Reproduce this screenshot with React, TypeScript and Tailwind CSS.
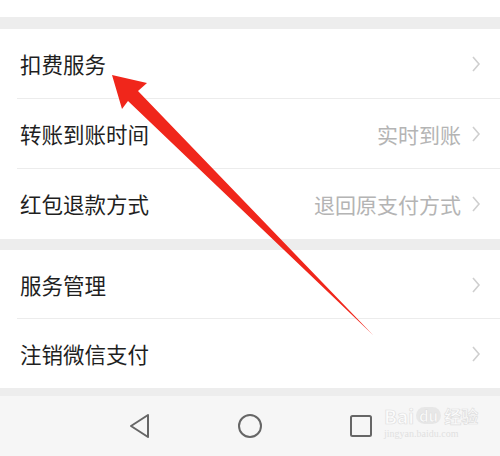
import React from "react";

const font = { fontFamily: '"Noto Sans CJK SC", "Noto Sans", sans-serif' };

function Chevron() {
  return (
    <svg width="10" height="18" viewBox="0 0 10 18" className="ml-[10px]">
      <path d="M2 2 L8 9 L2 16" fill="none" stroke="#cfcfcf" strokeWidth="1.6" />
    </svg>
  );
}

function Row({ label, value, h, divider }: { label: string; value?: string; h: string; divider?: boolean }) {
  return (
    <div className={`relative flex items-center pl-[20px] pr-[19px] bg-white ${h}`}>
      <span className="text-[21.5px] text-[#1f1f1f] flex-1 leading-none">{label}</span>
      {value && <span className="text-[21px] text-[#b4b4b4] leading-none">{value}</span>}
      <Chevron />
      {divider && <div className="absolute left-[17px] right-0 bottom-0 h-px bg-[#ececec]" />}
    </div>
  );
}

export default function App() {
  return (
    <div className="relative w-[500px] h-[456px] overflow-hidden bg-white flex flex-col" style={font}>
      <div className="h-[17px] bg-white" />
      <div className="h-[12px] bg-[#ededed]" />
      <Row label="扣费服务" h="h-[70px]" divider />
      <Row label="转账到账时间" value="实时到账" h="h-[70px]" divider />
      <Row label="红包退款方式" value="退回原支付方式" h="h-[70px]" />
      <div className="h-[11px] bg-[#ededed]" />
      <Row label="服务管理" h="h-[69px]" divider />
      <Row label="注销微信支付" h="h-[69px]" />
      <div className="h-[8px] bg-[#ededed]" />
      <div className="flex-1 bg-[#f6f6f6] relative flex items-center justify-center">
        <div className="flex items-center gap-[86px]">
          <svg width="24" height="26" viewBox="0 0 24 26">
            <path d="M21 2 L4 13 L21 24 Z" fill="none" stroke="#666" strokeWidth="2" strokeLinejoin="round" />
          </svg>
          <svg width="26" height="26" viewBox="0 0 26 26">
            <circle cx="13" cy="13" r="11" fill="none" stroke="#666" strokeWidth="2" />
          </svg>
          <svg width="24" height="24" viewBox="0 0 24 24">
            <rect x="2" y="2" width="20" height="20" rx="1.5" fill="none" stroke="#666" strokeWidth="2" />
          </svg>
        </div>
        <div className="absolute left-[384px] top-[10px] flex flex-col items-start opacity-70">
          <div className="flex items-center text-[19px] font-bold text-white leading-none" style={{ WebkitTextStroke: "0.7px #d6d6d6" }}>
            <span>Bai</span>
            <span className="ml-[2px] rounded-full bg-[#e2e2e2] px-[3px] py-[1px] text-[15px]">du</span>
            <span className="ml-[3px] text-[17px]">经验</span>
          </div>
          <span className="mt-[4px] text-[10px] text-[#d8d8d8] leading-none" style={{ fontFamily: '"Liberation Serif", serif' }}>jingyan.baidu.com</span>
        </div>
      </div>
      <svg className="absolute left-0 top-0 pointer-events-none" width="500" height="456" viewBox="0 0 500 456">
        <polygon points="112,75 147,83 138,91 373,335 128,101 122,109" fill="#f0261b" />
      </svg>
    </div>
  );
}
